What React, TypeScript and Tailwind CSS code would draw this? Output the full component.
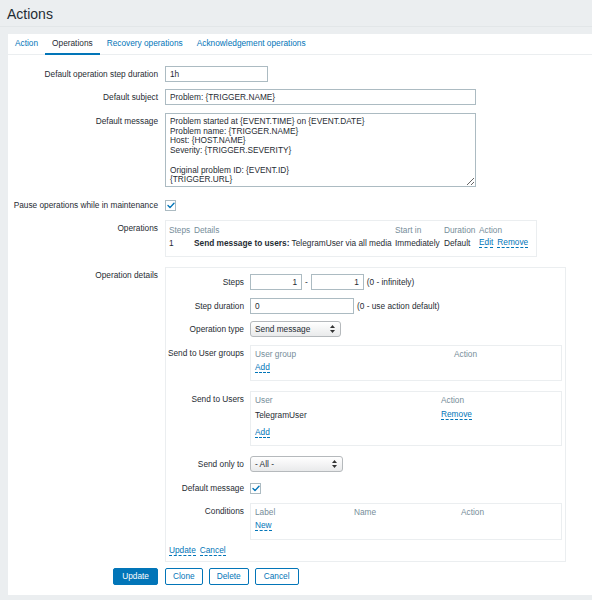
import React from 'react';

const Link = ({ children }: { children: React.ReactNode }) => (
  <span className="text-[#0275b8] border-b border-dashed border-[#0275b8] leading-[9px] inline-block">
    {children}
  </span>
);

const Check = () => (
  <div className="w-[11px] h-[11px] border border-[#acbbc2] bg-white flex items-center justify-center">
    <svg width="8" height="7" viewBox="0 0 8 7" fill="none">
      <path d="M1 3.6 L3 5.6 L7 1.2" stroke="#0275b8" strokeWidth="1.4" strokeLinecap="round" strokeLinejoin="round" />
    </svg>
  </div>
);

const Select = ({ value, width }: { value: string; width: string }) => (
  <div
    className={`${width} h-[16px] rounded-[3px] border border-[#b5b9bc] bg-gradient-to-b from-white to-[#e9eaeb] flex items-center justify-between pl-[4px] pr-[5px]`}
  >
    <span>{value}</span>
    <svg width="5" height="8" viewBox="0 0 5 8" fill="#333">
      <path d="M2.5 0 L5 3 L0 3 Z" />
      <path d="M0 5 L5 5 L2.5 8 Z" />
    </svg>
  </div>
);

const Row = ({ label, children, className = '' }: { label: string; children: React.ReactNode; className?: string }) => (
  <div className={`flex gap-[7px] ${className}`}>
    <div className="w-[150px] shrink-0 text-right leading-[16px] whitespace-nowrap">{label}</div>
    <div>{children}</div>
  </div>
);

const SubRow = ({ label, children, className = '' }: { label: string; children: React.ReactNode; className?: string }) => (
  <div className={`flex gap-[6px] ${className}`}>
    <div className="w-[78px] shrink-0 text-right leading-[16px] whitespace-nowrap">{label}</div>
    <div className="flex items-center">{children}</div>
  </div>
);

const inputCls = 'h-[16px] border border-[#acbbc2] bg-white px-[4px] leading-[14px]';

export default function App() {
  const tabs = ['Action', 'Operations', 'Recovery operations', 'Acknowledgement operations'];
  const message =
    'Problem started at {EVENT.TIME} on {EVENT.DATE}\nProblem name: {TRIGGER.NAME}\nHost: {HOST.NAME}\nSeverity: {TRIGGER.SEVERITY}\n\nOriginal problem ID: {EVENT.ID}\n{TRIGGER.URL}';

  return (
    <div className="min-h-[600px] bg-[#ebeef0] font-['Liberation_Sans',Arial,sans-serif] text-[8.3px] text-[#1f2c33]">
      <div className="h-[27px] border-b border-[#e2e6e8] px-[7px] pt-[7px]">
        <h1 className="text-[14px] leading-[14px] text-[#1f2c33]">Actions</h1>
      </div>

      <div className="ml-[8px] mt-[7px] h-[561px] bg-white">
        {/* tabs */}
        <div className="h-[21px] border-b border-[#ebeef0] flex">
          {tabs.map((t) => (
            <div
              key={t}
              className={`h-[21px] px-[7px] flex items-center border-b-2 ${
                t === 'Operations' ? 'border-[#0275b8] text-[#1f2c33]' : 'border-transparent text-[#0275b8]'
              }`}
            >
              {t}
            </div>
          ))}
        </div>

        <Row label="Default operation step duration" className="mt-[11px]">
          <div className={`${inputCls} w-[103px]`}>1h</div>
        </Row>
        <Row label="Default subject" className="mt-[7px]">
          <div className={`${inputCls} w-[311px]`}>Problem: {'{TRIGGER.NAME}'}</div>
        </Row>
        <Row label="Default message" className="mt-[8px]">
          <textarea
            readOnly
            value={message}
            className="block w-[311px] h-[74px] border border-[#acbbc2] px-[4px] pt-[3px] leading-[9.7px] text-[8.3px] overflow-hidden resize"
          />
        </Row>
        <div className="flex gap-[7px] mt-[10px] h-[16px] items-center">
          <div className="w-[150px] shrink-0 text-right whitespace-nowrap">Pause operations while in maintenance</div>
          <Check />
        </div>

        <Row label="Operations" className="mt-[7px]">
          <div className="w-[372px] border border-[#ebeef0] pl-[3px] pt-[3px] pb-[6px]">
            <div className="flex h-[12px] items-center text-[#768d99]">
              <div className="w-[25px]">Steps</div>
              <div className="w-[201px]">Details</div>
              <div className="w-[49px]">Start in</div>
              <div className="w-[35px]">Duration</div>
              <div>Action</div>
            </div>
            <div className="flex h-[14px] items-center">
              <div className="w-[25px]">1</div>
              <div className="w-[201px] whitespace-nowrap">
                <b>Send message to users:</b> TelegramUser via all media
              </div>
              <div className="w-[49px]">Immediately</div>
              <div className="w-[35px]">Default</div>
              <div className="flex gap-[4px]">
                <Link>Edit</Link>
                <Link>Remove</Link>
              </div>
            </div>
          </div>
        </Row>

        <Row label="Operation details" className="mt-[10px]">
          <div className="w-[401px] border border-[#ebeef0] pt-[6px] pb-[4px]">
            <SubRow label="Steps">
              <div className={`${inputCls} w-[52px] text-right`}>1</div>
              <span className="mx-[3px]">-</span>
              <div className={`${inputCls} w-[53px] text-right`}>1</div>
              <span className="ml-[3px]">(0 - infinitely)</span>
            </SubRow>
            <SubRow label="Step duration" className="mt-[8px]">
              <div className={`${inputCls} w-[104px]`}>0</div>
              <span className="ml-[3px]">(0 - use action default)</span>
            </SubRow>
            <SubRow label="Operation type" className="mt-[7px]">
              <Select value="Send message" width="w-[91px]" />
            </SubRow>

            <SubRow label="Send to User groups" className="mt-[8px]">
              <div className="w-[312px] border border-[#ebeef0] pl-[4px] pt-[2px] pb-[6px]">
                <div className="flex h-[12px] items-center text-[#768d99]">
                  <div className="w-[199px]">User group</div>
                  <div>Action</div>
                </div>
                <div className="h-[12px] mt-[2px] flex items-center">
                  <Link>Add</Link>
                </div>
              </div>
            </SubRow>

            <SubRow label="Send to Users" className="mt-[10px]">
              <div className="w-[312px] border border-[#ebeef0] pl-[4px] pt-[2px] pb-[6px]">
                <div className="flex h-[12px] items-center text-[#768d99]">
                  <div className="w-[186px]">User</div>
                  <div>Action</div>
                </div>
                <div className="flex h-[12px] mt-[3px] items-center">
                  <div className="w-[186px]">TelegramUser</div>
                  <Link>Remove</Link>
                </div>
                <div className="h-[12px] mt-[6px] flex items-center">
                  <Link>Add</Link>
                </div>
              </div>
            </SubRow>

            <SubRow label="Send only to" className="mt-[10px]">
              <Select value="- All -" width="w-[93px]" />
            </SubRow>

            <div className="flex gap-[6px] mt-[8px] h-[16px] items-center">
              <div className="w-[78px] shrink-0 text-right whitespace-nowrap">Default message</div>
              <Check />
            </div>

            <SubRow label="Conditions" className="mt-[7px]">
              <div className="w-[312px] border border-[#ebeef0] pl-[4px] pt-[2px] pb-[7px]">
                <div className="flex h-[12px] items-center text-[#768d99]">
                  <div className="w-[99px]">Label</div>
                  <div className="w-[107px]">Name</div>
                  <div>Action</div>
                </div>
                <div className="h-[12px] mt-[2px] flex items-center">
                  <Link>New</Link>
                </div>
              </div>
            </SubRow>

            <div className="flex gap-[4px] pl-[3px] mt-[5px] h-[12px] items-center">
              <Link>Update</Link>
              <Link>Cancel</Link>
            </div>
          </div>
        </Row>

        <div className="flex gap-[7px] mt-[6px]">
          <div className="w-[150px] shrink-0 flex justify-end">
            <button className="h-[17px] px-[8px] rounded-[2px] border border-[#0275b8] bg-[#0275b8] text-white">
              Update
            </button>
          </div>
          <div className="flex gap-[6px]">
            <button className="h-[17px] px-[7px] rounded-[2px] border border-[#0275b8] bg-white text-[#0275b8]">Clone</button>
            <button className="h-[17px] px-[7px] rounded-[2px] border border-[#0275b8] bg-white text-[#0275b8]">Delete</button>
            <button className="h-[17px] px-[8px] rounded-[2px] border border-[#0275b8] bg-white text-[#0275b8]">Cancel</button>
          </div>
        </div>
      </div>
    </div>
  );
}
